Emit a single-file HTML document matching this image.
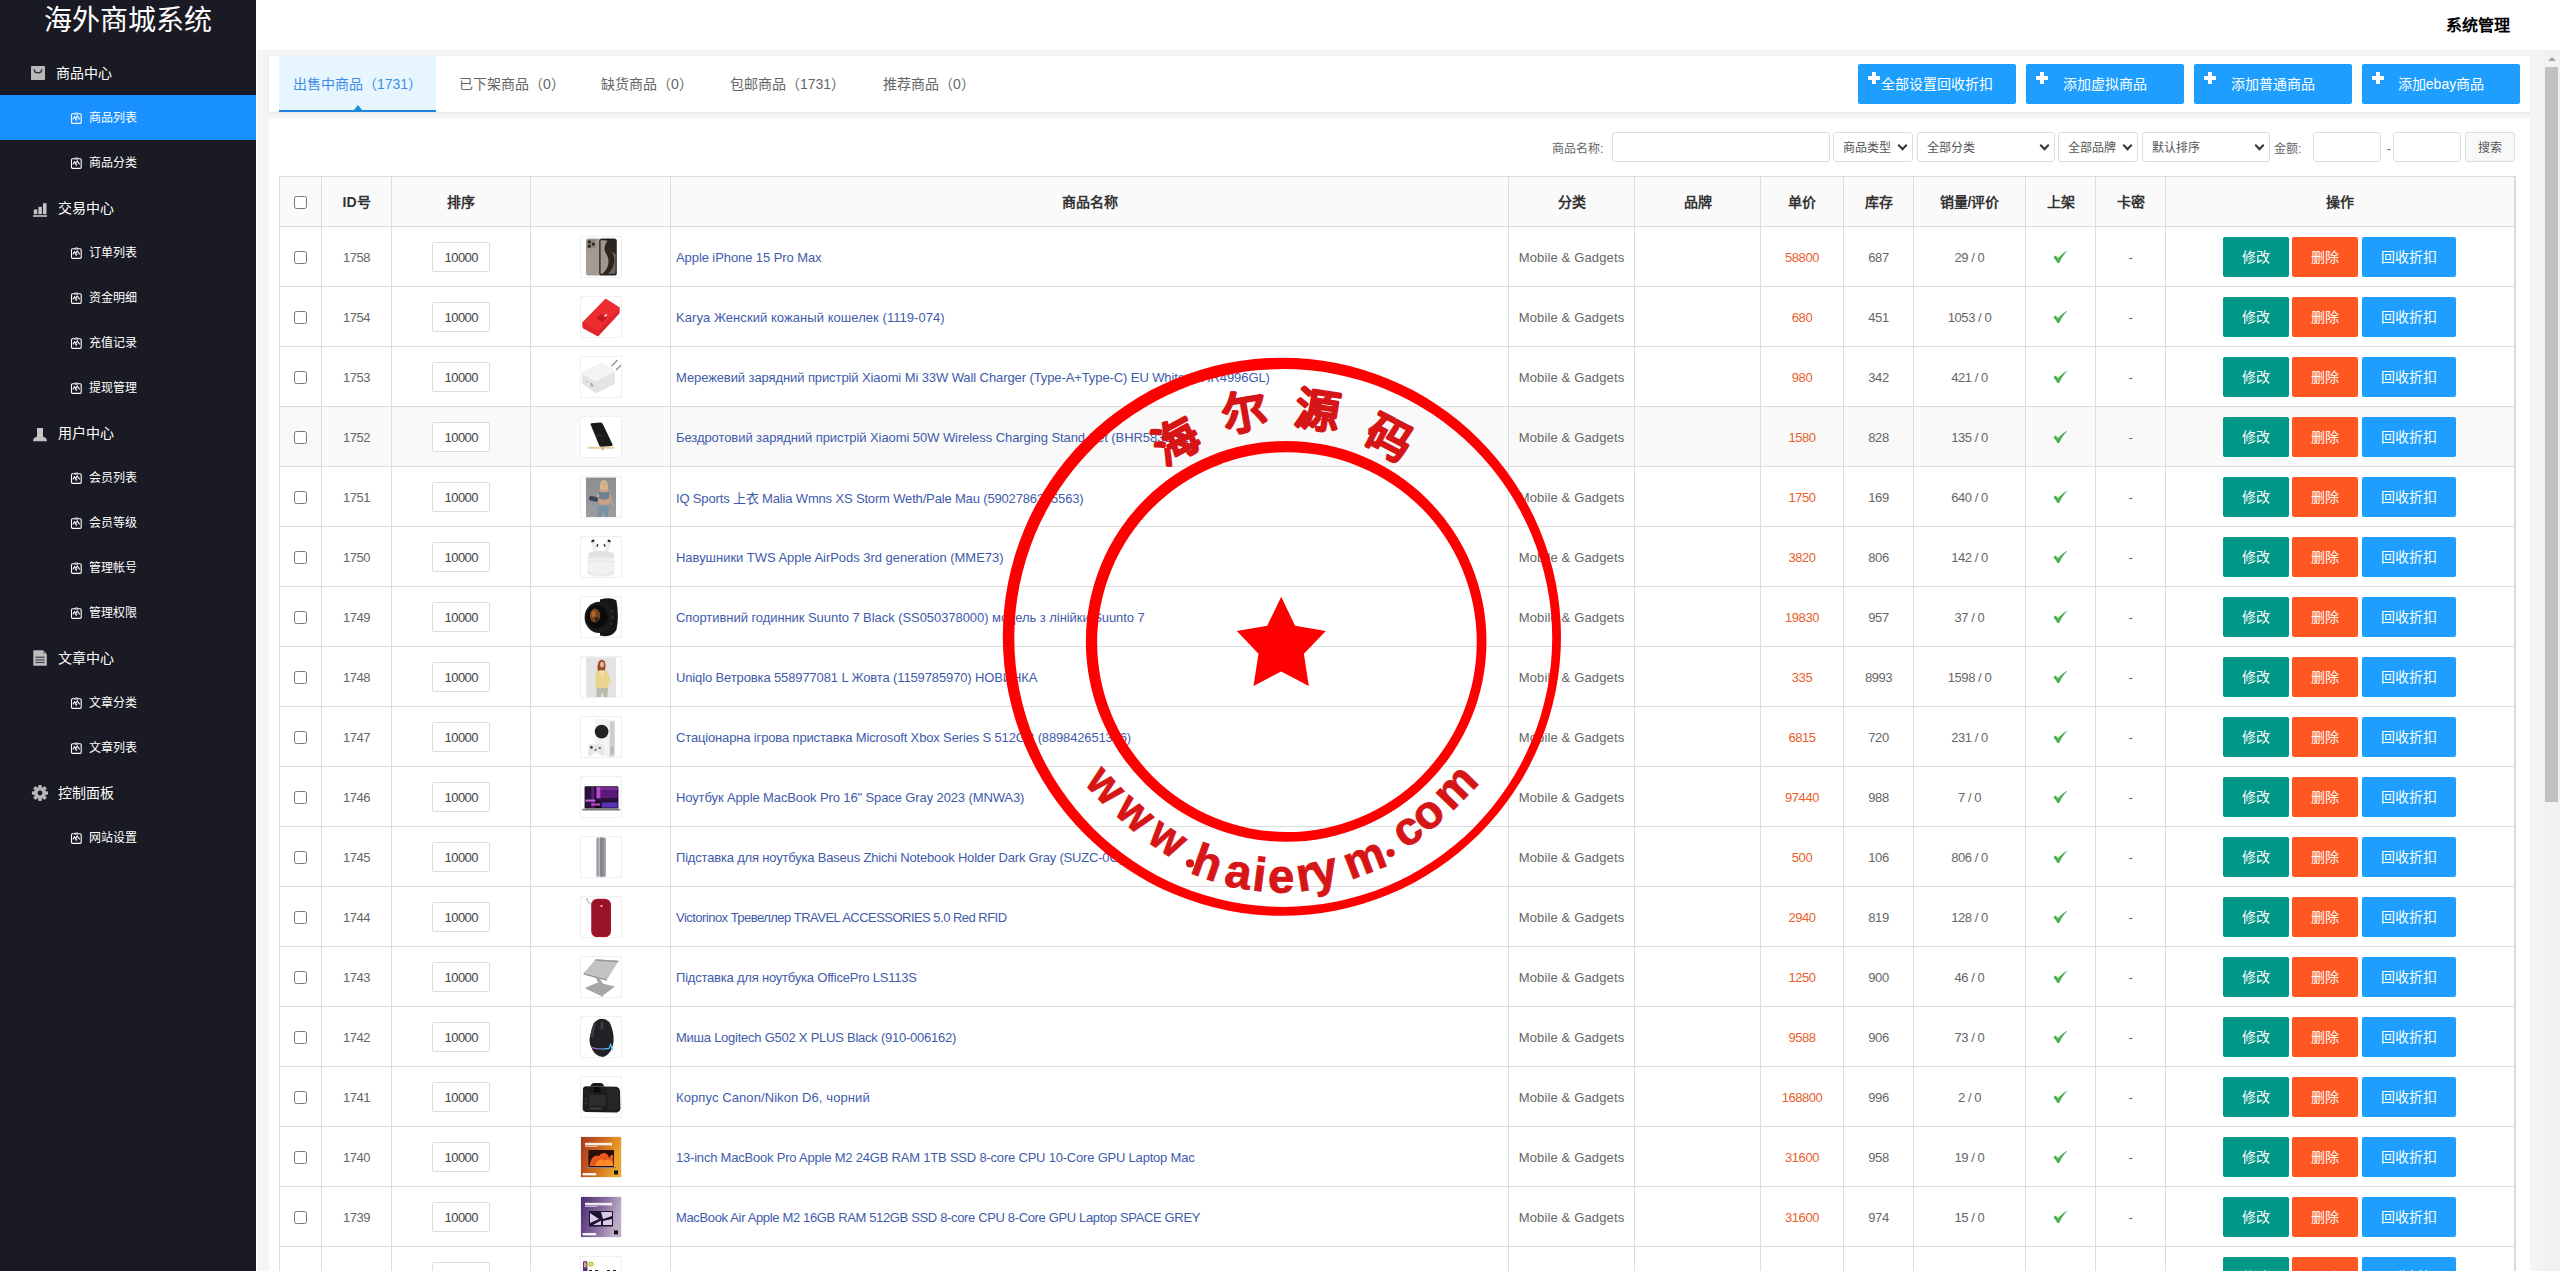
<!DOCTYPE html>
<html lang="zh-CN"><head><meta charset="utf-8"><title>海外商城系统</title>
<style>
*{box-sizing:border-box}
html,body{margin:0;padding:0}
body{width:2560px;height:1271px;overflow:hidden;position:relative;background:#fff;font-family:"Liberation Sans",sans-serif;font-size:13px;color:#666}
ul,li{margin:0;padding:0;list-style:none}
a{text-decoration:none}
i{font-style:normal}
/* sidebar */
#side{position:absolute;left:0;top:0;width:256px;height:1271px;background:#191a23;color:#fff;overflow:hidden}
#side .logo{position:absolute;left:0;top:1px;width:256px;height:40px;line-height:40px;text-align:center;font-size:28px;color:#fff;white-space:nowrap}
#side .menu{position:absolute;left:0;top:50px;width:256px}
#side .g,#side .s{position:relative;height:45px;line-height:47px;white-space:nowrap;color:#fff}
#side .g{font-size:14px}
#side .g span{position:absolute;left:57px;top:0}
#side .g svg{position:absolute;left:30px;top:13px}
#side .s{font-size:12px}
#side .s span{position:absolute;left:89px;top:0}
#side .s svg{position:absolute;left:70px;top:17px}
#side .s.on{background:#1890ff}
/* top */
#top{position:absolute;left:256px;top:0;width:2304px;height:50px;background:#fff}
#top .sys{position:absolute;right:50px;top:0;height:50px;line-height:52px;font-size:16px;font-weight:bold;color:#000}
#main{position:absolute;left:257px;top:50px;width:2286px;height:1221px;background:#f4f4f4;overflow:hidden}
#card1{position:absolute;left:12px;top:6px;width:2261px;height:56px;background:#fff;box-shadow:0 1px 3px rgba(0,0,0,.06)}
.tabs{position:absolute;left:0;top:0;height:56px;white-space:nowrap;font-size:0}
.tabs li{display:block;position:absolute;top:0;height:56px;line-height:56px;padding:0 14px;font-size:14px;color:#666;border-bottom:2px solid transparent;vertical-align:top}
.tabs li.on{background:#e6f5fe;color:#3f8ee6;border-bottom-color:#1e86e0}
.tabs li .tri{position:absolute;left:50%;bottom:0;margin-left:-4px;width:0;height:0;border-left:4px solid transparent;border-right:4px solid transparent;border-bottom:5px solid #1492d6}
.tbtn{position:absolute;top:8px;width:158px;height:40px;line-height:41px;background:#1e9fff;color:#fff;font-size:14px;text-align:center;border-radius:2px;white-space:nowrap}
.tbtn .plus{position:absolute;left:10px;top:8px;width:12px;height:12px}
.tbtn .plus:before{content:"";position:absolute;left:3.75px;top:0;width:4.5px;height:12px;background:#fff}
.tbtn .plus:after{content:"";position:absolute;left:0;top:3.75px;width:12px;height:4.5px;background:#fff}
#card2{position:absolute;left:12px;top:68px;width:2261px;height:1200px;background:#fff}
.filter{position:absolute;left:0;top:14px;width:2261px;height:30px;font-size:12px;color:#666}
.filter span{position:absolute;top:0;height:30px;line-height:35px;white-space:nowrap;overflow:hidden}
.filter .inp{border:1px solid #ddd;border-radius:3px;background:#fff}
.filter .sel{border:1px solid #ddd;border-radius:3px;background:#fff;padding-left:9px;height:30px;line-height:31px;color:#555}
.filter .sel .chev{position:absolute;right:6px;top:9px;width:7px;height:7px;border-right:2px solid #333;border-bottom:2px solid #333;transform:rotate(45deg);transform-origin:center}
.filter .sbtn{border:1px solid #ddd;border-radius:3px;background:#f8f8f8;text-align:center;color:#555;line-height:31px}
/* table */
.tb{position:absolute;left:10px;top:58px;width:2236px;table-layout:fixed;border-collapse:collapse;border:1px solid #dcdcdc;border-right:2px solid #dcdcdc;color:#666;font-size:13px}
.tb th,.tb td{border:1px solid #dcdcdc;text-align:center;vertical-align:middle;padding:0;overflow:hidden;white-space:nowrap}
.tb th{height:50px;background:#fafafa;color:#333;font-size:14px;font-weight:bold}
.tb th:not(:first-child){padding-bottom:2px}
.tb td.t{padding-top:2px;letter-spacing:-.45px}
.tb td{height:60px}
.tb tr.hov td{background:#f9f9f9}
.tb td.nm{text-align:left;padding-left:5px;padding-top:2px}
.tb td.nm a{color:#3f5bab;display:inline-block}
.tb td.pr{color:#e8602c}
.cb{display:inline-block;width:13px;height:13px;border:1px solid #767676;border-radius:2.5px;background:#fff;vertical-align:middle;position:relative;top:0px;left:-.5px}
.ord{display:inline-block;width:58px;height:30px;line-height:30px;border:1px solid #ddd;border-radius:2px;background:#fff;color:#444;font-size:13px;vertical-align:middle;letter-spacing:-.5px;text-indent:.5px}
.th{display:inline-block;width:42px;height:42px;border:1px solid #f0f0f0;background:#fff;vertical-align:middle;position:relative;left:0;overflow:hidden}
.th svg{display:block}
.ok{vertical-align:middle;position:relative;left:-1px;top:-1px}
.op{font-size:0;white-space:nowrap}
.op a{display:inline-block;height:40px;line-height:40px;padding:0 19px;color:#fff;font-size:14px;border-radius:2px;vertical-align:middle;margin:0}
.op .b2{margin:0 4px 0 3px}
.op .b1{background:#009688}
.op .b2{background:#ff5722}
.op .b3{background:#1e9fff}
/* scrollbar */
#sbar{position:absolute;left:2543px;top:50px;width:17px;height:1221px;background:#f1f1f1}
#sbar .up{position:absolute;left:5px;top:7px;width:0;height:0;border-left:4px solid transparent;border-right:4px solid transparent;border-bottom:4px solid #a3a3a3}
#sbar .thumb{position:absolute;left:2px;top:17px;width:13px;height:735px;background:#c1c1c1}
#stamp{position:absolute;left:0;top:0;width:2560px;height:1271px;pointer-events:none}

</style></head>
<body>
<div id="side">
 <div class="logo">海外商城系统</div>
 <div class="menu">
  <div class="g"><svg width="20" height="20" viewBox="0 0 20 20"><rect x="1" y="3" width="14" height="14" rx="0.8" fill="#b9b9b9"/><path d="M4.2 6.2 C4.2 11 11.8 11 11.8 6.2" fill="none" stroke="#26272f" stroke-width="1.3"/></svg><span style="left:56px">商品中心</span></div>
  <div class="s on"><svg width="13" height="13" viewBox="0 0 13 13"><rect x="1.5" y="1.75" width="9.7" height="9.6" rx="1" fill="none" stroke="#fff" stroke-width="1.1"/><ellipse cx="6.35" cy="1.45" rx="2.1" ry="1.05" fill="#fff"/><ellipse cx="6.35" cy="1.45" rx="1.1" ry=".35" fill="#2b5fb4"/><path d="M2.9 7.4 L4.6 4.7 L5.7 6.2 L7.2 3.9 L9.7 7.4" fill="none" stroke="#fff" stroke-width="1.05"/><path d="M4.6 6.6 L6.3 9.6 L7.6 6.4 Z" fill="#fff" opacity=".85"/></svg><span>商品列表</span></div>
  <div class="s"><svg width="13" height="13" viewBox="0 0 13 13"><rect x="1.5" y="1.75" width="9.7" height="9.6" rx="1" fill="none" stroke="#fff" stroke-width="1.1"/><ellipse cx="6.35" cy="1.45" rx="2.1" ry="1.05" fill="#fff"/><ellipse cx="6.35" cy="1.45" rx="1.1" ry=".35" fill="#2b5fb4"/><path d="M2.9 7.4 L4.6 4.7 L5.7 6.2 L7.2 3.9 L9.7 7.4" fill="none" stroke="#fff" stroke-width="1.05"/><path d="M4.6 6.6 L6.3 9.6 L7.6 6.4 Z" fill="#fff" opacity=".85"/></svg><span>商品分类</span></div>
  <div class="g"><svg width="20" height="20" viewBox="0 0 20 20"><rect x="3" y="17.2" width="14" height="1.6" fill="#c4c4c4"/><rect x="3.8" y="11.4" width="3.5" height="4.8" fill="#c4c4c4"/><rect x="8.4" y="8.8" width="3.5" height="7.4" fill="#c4c4c4"/><rect x="13" y="5.2" width="3.5" height="11" fill="#c4c4c4"/></svg><span style="left:58px">交易中心</span></div>
  <div class="s"><svg width="13" height="13" viewBox="0 0 13 13"><rect x="1.5" y="1.75" width="9.7" height="9.6" rx="1" fill="none" stroke="#fff" stroke-width="1.1"/><ellipse cx="6.35" cy="1.45" rx="2.1" ry="1.05" fill="#fff"/><ellipse cx="6.35" cy="1.45" rx="1.1" ry=".35" fill="#2b5fb4"/><path d="M2.9 7.4 L4.6 4.7 L5.7 6.2 L7.2 3.9 L9.7 7.4" fill="none" stroke="#fff" stroke-width="1.05"/><path d="M4.6 6.6 L6.3 9.6 L7.6 6.4 Z" fill="#fff" opacity=".85"/></svg><span>订单列表</span></div>
  <div class="s"><svg width="13" height="13" viewBox="0 0 13 13"><rect x="1.5" y="1.75" width="9.7" height="9.6" rx="1" fill="none" stroke="#fff" stroke-width="1.1"/><ellipse cx="6.35" cy="1.45" rx="2.1" ry="1.05" fill="#fff"/><ellipse cx="6.35" cy="1.45" rx="1.1" ry=".35" fill="#2b5fb4"/><path d="M2.9 7.4 L4.6 4.7 L5.7 6.2 L7.2 3.9 L9.7 7.4" fill="none" stroke="#fff" stroke-width="1.05"/><path d="M4.6 6.6 L6.3 9.6 L7.6 6.4 Z" fill="#fff" opacity=".85"/></svg><span>资金明细</span></div>
  <div class="s"><svg width="13" height="13" viewBox="0 0 13 13"><rect x="1.5" y="1.75" width="9.7" height="9.6" rx="1" fill="none" stroke="#fff" stroke-width="1.1"/><ellipse cx="6.35" cy="1.45" rx="2.1" ry="1.05" fill="#fff"/><ellipse cx="6.35" cy="1.45" rx="1.1" ry=".35" fill="#2b5fb4"/><path d="M2.9 7.4 L4.6 4.7 L5.7 6.2 L7.2 3.9 L9.7 7.4" fill="none" stroke="#fff" stroke-width="1.05"/><path d="M4.6 6.6 L6.3 9.6 L7.6 6.4 Z" fill="#fff" opacity=".85"/></svg><span>充值记录</span></div>
  <div class="s"><svg width="13" height="13" viewBox="0 0 13 13"><rect x="1.5" y="1.75" width="9.7" height="9.6" rx="1" fill="none" stroke="#fff" stroke-width="1.1"/><ellipse cx="6.35" cy="1.45" rx="2.1" ry="1.05" fill="#fff"/><ellipse cx="6.35" cy="1.45" rx="1.1" ry=".35" fill="#2b5fb4"/><path d="M2.9 7.4 L4.6 4.7 L5.7 6.2 L7.2 3.9 L9.7 7.4" fill="none" stroke="#fff" stroke-width="1.05"/><path d="M4.6 6.6 L6.3 9.6 L7.6 6.4 Z" fill="#fff" opacity=".85"/></svg><span>提现管理</span></div>
  <div class="g"><svg width="20" height="20" viewBox="0 0 20 20"><path d="M7 5 H13 V13.6 L16.2 15.2 L17 18.2 H3 L3.8 15.2 L7 13.6 Z" fill="#c6c6c6"/></svg><span style="left:58px">用户中心</span></div>
  <div class="s"><svg width="13" height="13" viewBox="0 0 13 13"><rect x="1.5" y="1.75" width="9.7" height="9.6" rx="1" fill="none" stroke="#fff" stroke-width="1.1"/><ellipse cx="6.35" cy="1.45" rx="2.1" ry="1.05" fill="#fff"/><ellipse cx="6.35" cy="1.45" rx="1.1" ry=".35" fill="#2b5fb4"/><path d="M2.9 7.4 L4.6 4.7 L5.7 6.2 L7.2 3.9 L9.7 7.4" fill="none" stroke="#fff" stroke-width="1.05"/><path d="M4.6 6.6 L6.3 9.6 L7.6 6.4 Z" fill="#fff" opacity=".85"/></svg><span>会员列表</span></div>
  <div class="s"><svg width="13" height="13" viewBox="0 0 13 13"><rect x="1.5" y="1.75" width="9.7" height="9.6" rx="1" fill="none" stroke="#fff" stroke-width="1.1"/><ellipse cx="6.35" cy="1.45" rx="2.1" ry="1.05" fill="#fff"/><ellipse cx="6.35" cy="1.45" rx="1.1" ry=".35" fill="#2b5fb4"/><path d="M2.9 7.4 L4.6 4.7 L5.7 6.2 L7.2 3.9 L9.7 7.4" fill="none" stroke="#fff" stroke-width="1.05"/><path d="M4.6 6.6 L6.3 9.6 L7.6 6.4 Z" fill="#fff" opacity=".85"/></svg><span>会员等级</span></div>
  <div class="s"><svg width="13" height="13" viewBox="0 0 13 13"><rect x="1.5" y="1.75" width="9.7" height="9.6" rx="1" fill="none" stroke="#fff" stroke-width="1.1"/><ellipse cx="6.35" cy="1.45" rx="2.1" ry="1.05" fill="#fff"/><ellipse cx="6.35" cy="1.45" rx="1.1" ry=".35" fill="#2b5fb4"/><path d="M2.9 7.4 L4.6 4.7 L5.7 6.2 L7.2 3.9 L9.7 7.4" fill="none" stroke="#fff" stroke-width="1.05"/><path d="M4.6 6.6 L6.3 9.6 L7.6 6.4 Z" fill="#fff" opacity=".85"/></svg><span>管理帐号</span></div>
  <div class="s"><svg width="13" height="13" viewBox="0 0 13 13"><rect x="1.5" y="1.75" width="9.7" height="9.6" rx="1" fill="none" stroke="#fff" stroke-width="1.1"/><ellipse cx="6.35" cy="1.45" rx="2.1" ry="1.05" fill="#fff"/><ellipse cx="6.35" cy="1.45" rx="1.1" ry=".35" fill="#2b5fb4"/><path d="M2.9 7.4 L4.6 4.7 L5.7 6.2 L7.2 3.9 L9.7 7.4" fill="none" stroke="#fff" stroke-width="1.05"/><path d="M4.6 6.6 L6.3 9.6 L7.6 6.4 Z" fill="#fff" opacity=".85"/></svg><span>管理权限</span></div>
  <div class="g"><svg width="20" height="20" viewBox="0 0 20 20"><path d="M3.3 2.2 H13 L16.8 6 V17.8 H3.3 Z" fill="#bdbdbd"/><path d="M13 2.2 V6 H16.8" fill="#8e8e8e"/><rect x="5.4" y="8.6" width="9.2" height="1.3" fill="#4a4b52"/><rect x="5.4" y="11.2" width="9.2" height="1.3" fill="#4a4b52"/><rect x="5.4" y="13.8" width="9.2" height="1.3" fill="#4a4b52"/></svg><span style="left:58px">文章中心</span></div>
  <div class="s"><svg width="13" height="13" viewBox="0 0 13 13"><rect x="1.5" y="1.75" width="9.7" height="9.6" rx="1" fill="none" stroke="#fff" stroke-width="1.1"/><ellipse cx="6.35" cy="1.45" rx="2.1" ry="1.05" fill="#fff"/><ellipse cx="6.35" cy="1.45" rx="1.1" ry=".35" fill="#2b5fb4"/><path d="M2.9 7.4 L4.6 4.7 L5.7 6.2 L7.2 3.9 L9.7 7.4" fill="none" stroke="#fff" stroke-width="1.05"/><path d="M4.6 6.6 L6.3 9.6 L7.6 6.4 Z" fill="#fff" opacity=".85"/></svg><span>文章分类</span></div>
  <div class="s"><svg width="13" height="13" viewBox="0 0 13 13"><rect x="1.5" y="1.75" width="9.7" height="9.6" rx="1" fill="none" stroke="#fff" stroke-width="1.1"/><ellipse cx="6.35" cy="1.45" rx="2.1" ry="1.05" fill="#fff"/><ellipse cx="6.35" cy="1.45" rx="1.1" ry=".35" fill="#2b5fb4"/><path d="M2.9 7.4 L4.6 4.7 L5.7 6.2 L7.2 3.9 L9.7 7.4" fill="none" stroke="#fff" stroke-width="1.05"/><path d="M4.6 6.6 L6.3 9.6 L7.6 6.4 Z" fill="#fff" opacity=".85"/></svg><span>文章列表</span></div>
  <div class="g"><svg width="20" height="20" viewBox="0 0 20 20"><g fill="#b5b5b5"><circle cx="10" cy="10" r="6"/><g id="t"><rect x="8.2" y="1.9" width="3.6" height="16.2" rx="0.8"/></g><rect x="8.2" y="1.9" width="3.6" height="16.2" rx="0.8" transform="rotate(45 10 10)"/><rect x="8.2" y="1.9" width="3.6" height="16.2" rx="0.8" transform="rotate(90 10 10)"/><rect x="8.2" y="1.9" width="3.6" height="16.2" rx="0.8" transform="rotate(135 10 10)"/></g><circle cx="10" cy="10" r="2.4" fill="#191a23"/></svg><span style="left:58px">控制面板</span></div>
  <div class="s"><svg width="13" height="13" viewBox="0 0 13 13"><rect x="1.5" y="1.75" width="9.7" height="9.6" rx="1" fill="none" stroke="#fff" stroke-width="1.1"/><ellipse cx="6.35" cy="1.45" rx="2.1" ry="1.05" fill="#fff"/><ellipse cx="6.35" cy="1.45" rx="1.1" ry=".35" fill="#2b5fb4"/><path d="M2.9 7.4 L4.6 4.7 L5.7 6.2 L7.2 3.9 L9.7 7.4" fill="none" stroke="#fff" stroke-width="1.05"/><path d="M4.6 6.6 L6.3 9.6 L7.6 6.4 Z" fill="#fff" opacity=".85"/></svg><span>网站设置</span></div>
 </div>
</div>

<div id="top"><span class="sys">系统管理</span></div>
<div id="main">
 <div id="card1">
  <ul class="tabs">
   <li class="on" style="left:10px;width:157px">出售中商品（1731）<i class="tri"></i></li><li style="left:176px">已下架商品（0）</li><li style="left:318px">缺货商品（0）</li><li style="left:447px">包邮商品（1731）</li><li style="left:600px">推荐商品（0）</li>
  </ul>
  <a class="tbtn" style="left:1589px"><i class="plus"></i>全部设置回收折扣</a>
  <a class="tbtn" style="left:1757px"><i class="plus"></i>添加虚拟商品</a>
  <a class="tbtn" style="left:1925px"><i class="plus"></i>添加普通商品</a>
  <a class="tbtn" style="left:2093px"><i class="plus"></i>添加ebay商品</a>
 </div>
 <div id="card2">
  <div class="filter">
   <span class="lb" style="left:1283px">商品名称:</span>
   <span class="inp" style="left:1343px;width:218px"></span>
   <span class="sel" style="left:1564px;width:80px">商品类型<i class="chev"></i></span>
   <span class="sel" style="left:1648px;width:138px">全部分类<i class="chev"></i></span>
   <span class="sel" style="left:1789px;width:80px">全部品牌<i class="chev"></i></span>
   <span class="sel" style="left:1873px;width:128px">默认排序<i class="chev"></i></span>
   <span class="lb" style="left:2005px">金额:</span>
   <span class="inp" style="left:2044px;width:68px"></span>
   <span class="lb" style="left:2118px">-</span>
   <span class="inp" style="left:2124px;width:68px"></span>
   <span class="sbtn" style="left:2196px;width:50px">搜索</span>
  </div>
  <table class="tb" cellspacing="0" cellpadding="0">
   <colgroup><col style="width:42px"><col style="width:70px"><col style="width:139px"><col style="width:140px"><col style="width:838px"><col style="width:126px"><col style="width:126px"><col style="width:83px"><col style="width:70px"><col style="width:112px"><col style="width:70px"><col style="width:70px"><col style="width:349px"></colgroup>
   <thead><tr><th><i class="cb"></i></th><th>ID号</th><th>排序</th><th></th><th>商品名称</th><th>分类</th><th>品牌</th><th>单价</th><th>库存</th><th>销量/评价</th><th>上架</th><th>卡密</th><th>操作</th></tr></thead>
   <tbody>
    <tr><td><i class="cb"></i></td><td class="t">1758</td><td><span class="ord">10000</span></td><td><span class="th"><svg width="40" height="40" viewBox="0 0 40 40"><rect x="5" y="1.5" width="14.5" height="37" rx="2.6" fill="#a29c93"/><rect x="6" y="2.6" width="8.6" height="9" rx="2.2" fill="#8c867d"/><circle cx="8.3" cy="5" r="1.7" fill="#2c2926"/><circle cx="8.3" cy="9.2" r="1.7" fill="#2c2926"/><circle cx="12.3" cy="7.1" r="1.7" fill="#2c2926"/><rect x="18.2" y="1.5" width="17.6" height="37" rx="2.6" fill="#2b2622"/><path d="M19.6 3.2 H27 C23 8 22.5 13 25.5 17.5 C29 23 28 31 21.5 36.8 H19.6 Z" fill="#a1988d"/><path d="M30 14 C35 19 34.5 30 27 36.8 H31.5 C34.5 36.8 34.6 36 34.6 33 V17 Z" fill="#6f665d"/><rect x="24.5" y="2.3" width="5" height="1.3" rx=".6" fill="#111"/></svg></span></td><td class="nm"><a id="n1758" style="letter-spacing:-0.084px">Apple iPhone 15 Pro Max</a></td><td class="t" style="letter-spacing:.14px">Mobile &amp; Gadgets</td><td></td><td class="pr t">58800</td><td class="t">687</td><td class="t">29 / 0</td><td><svg class="ok" width="14" height="12" viewBox="0 0 14 12"><path d="M0.2 6.2 L2.6 4.6 L5.1 7.2 C7.6 4.2 10.4 1.8 13.6 0 L14 0.6 C10.9 3.6 8.3 7.2 6.2 12 L4.4 12 C3.4 9.8 2 7.8 0.2 6.2 Z" fill="#4caf50"/></svg></td><td class="t">-</td><td class="op"><a class="b1">修改</a> <a class="b2">删除</a> <a class="b3">回收折扣</a></td></tr>
    <tr><td><i class="cb"></i></td><td class="t">1754</td><td><span class="ord">10000</span></td><td><span class="th"><svg width="40" height="40" viewBox="0 0 40 40"><path d="M24.6 1.8 L38.6 10.6 Q39.2 13.6 38.4 16.4 L17 39.4 L1.8 31.3 Q.8 28.4 1.4 25.6 Z" fill="#e1232b"/><path d="M24.6 1.8 L38.6 10.6 L17.4 33.4 L1.4 25.6 Z" fill="#ee2d33"/><path d="M19.5 16.8 L25.8 20.4 L21.6 25.2 L15.4 21.6 Z" fill="#c9151f"/><rect x="23" y="17.6" width="3.2" height="1.6" fill="#f3dede" transform="rotate(-42 24.6 18.4)"/></svg></span></td><td class="nm"><a id="n1754" style="letter-spacing:0.057px">Karya Женский кожаный кошелек (1119-074)</a></td><td class="t" style="letter-spacing:.14px">Mobile &amp; Gadgets</td><td></td><td class="pr t">680</td><td class="t">451</td><td class="t">1053 / 0</td><td><svg class="ok" width="14" height="12" viewBox="0 0 14 12"><path d="M0.2 6.2 L2.6 4.6 L5.1 7.2 C7.6 4.2 10.4 1.8 13.6 0 L14 0.6 C10.9 3.6 8.3 7.2 6.2 12 L4.4 12 C3.4 9.8 2 7.8 0.2 6.2 Z" fill="#4caf50"/></svg></td><td class="t">-</td><td class="op"><a class="b1">修改</a> <a class="b2">删除</a> <a class="b3">回收折扣</a></td></tr>
    <tr><td><i class="cb"></i></td><td class="t">1753</td><td><span class="ord">10000</span></td><td><span class="th"><svg width="40" height="40" viewBox="0 0 40 40"><path d="M31 8.5 L36 3.6" stroke="#9b9b9b" stroke-width="1.6" stroke-linecap="round"/><path d="M35.5 12.6 L40 8.2" stroke="#9b9b9b" stroke-width="1.6" stroke-linecap="round"/><path d="M.8 17 Q.4 15.6 2 14.8 L19 6.4 Q20.6 5.8 22 6.6 L33 13.2 Q34.2 14 34 15.4 L34 25.6 Q34 26.8 32.8 27.4 L16.6 35.8 Q15.2 36.4 14 35.6 L2 27.6 Q1 26.8 1 25.6 Z" fill="#e4e4e4"/><path d="M.8 17 Q.4 15.6 2 14.8 L19 6.4 Q20.6 5.8 22 6.6 L33 13.2 Q34.2 14 33 15 L15.6 24 Q14.4 24.6 13.2 23.8 Z" fill="#f4f4f4"/><rect x="5" y="23" width="1.2" height="2.6" rx=".6" fill="#bdbdbd" transform="rotate(-30 5.6 24.3)"/><rect x="9.6" y="26" width="2.2" height="3.6" rx=".5" fill="#9fa3b3" transform="rotate(-28 10.7 27.8)"/></svg></span></td><td class="nm"><a id="n1753" style="letter-spacing:-0.096px">Мережевий зарядний пристрій Xiaomi Mi 33W Wall Charger (Type-A+Type-C) EU White (BHR4996GL)</a></td><td class="t" style="letter-spacing:.14px">Mobile &amp; Gadgets</td><td></td><td class="pr t">980</td><td class="t">342</td><td class="t">421 / 0</td><td><svg class="ok" width="14" height="12" viewBox="0 0 14 12"><path d="M0.2 6.2 L2.6 4.6 L5.1 7.2 C7.6 4.2 10.4 1.8 13.6 0 L14 0.6 C10.9 3.6 8.3 7.2 6.2 12 L4.4 12 C3.4 9.8 2 7.8 0.2 6.2 Z" fill="#4caf50"/></svg></td><td class="t">-</td><td class="op"><a class="b1">修改</a> <a class="b2">删除</a> <a class="b3">回收折扣</a></td></tr>
    <tr class="hov"><td><i class="cb"></i></td><td class="t">1752</td><td><span class="ord">10000</span></td><td><span class="th"><svg width="40" height="40" viewBox="0 0 40 40"><rect x="6.5" y="29.8" width="27" height="2" rx=".6" fill="#e9cba3"/><rect x="20.5" y="30" width="2.4" height="3.4" fill="#dcb98d"/><path d="M9.6 7.6 Q9 6.4 10.4 6.2 L19.4 5.6 Q21 5.6 21.8 7 L31.6 27.4 Q32 28.8 30.6 29 L20.4 29.8 Q18.8 29.8 18.2 28.4 Z" fill="#1b1b1b"/><path d="M16 18.4 L22.6 18" stroke="#3a3a3a" stroke-width=".9"/></svg></span></td><td class="nm"><a id="n1752" style="letter-spacing:-0.073px">Бездротовий зарядний пристрій Xiaomi 50W Wireless Charging Stand Set (BHR5835GL)</a></td><td class="t" style="letter-spacing:.14px">Mobile &amp; Gadgets</td><td></td><td class="pr t">1580</td><td class="t">828</td><td class="t">135 / 0</td><td><svg class="ok" width="14" height="12" viewBox="0 0 14 12"><path d="M0.2 6.2 L2.6 4.6 L5.1 7.2 C7.6 4.2 10.4 1.8 13.6 0 L14 0.6 C10.9 3.6 8.3 7.2 6.2 12 L4.4 12 C3.4 9.8 2 7.8 0.2 6.2 Z" fill="#4caf50"/></svg></td><td class="t">-</td><td class="op"><a class="b1">修改</a> <a class="b2">删除</a> <a class="b3">回收折扣</a></td></tr>
    <tr><td><i class="cb"></i></td><td class="t">1751</td><td><span class="ord">10000</span></td><td><span class="th"><svg width="40" height="40" viewBox="0 0 40 40"><defs><linearGradient id="g5" x1="0" y1="0" x2="0" y2="1"><stop offset="0" stop-color="#8b8d90"/><stop offset="1" stop-color="#9c9ea1"/></linearGradient></defs><rect x="5" y=".6" width="30" height="39.4" fill="url(#g5)"/><path d="M19.6 4.4 Q23 1.6 26 4.6 Q27.6 9 26.4 13.4 L19.4 13.4 Q18.4 8.6 19.6 4.4 Z" fill="#d8b88c"/><ellipse cx="23" cy="7.4" rx="2.3" ry="3" fill="#d9ab8d"/><path d="M18 13.2 Q23 11.8 28 13.2 L29.4 21.4 L27.8 27.6 L18.8 27.6 L16.6 21.2 Z" fill="#cfa184"/><path d="M17.6 14.2 Q22.8 16.6 28 14.2 L28.6 21.6 Q22.8 23.8 17.2 21.6 Z" fill="#6a8292"/><path d="M16.4 29.4 Q22.6 27.4 28.6 29.4 L27 40 L23.6 40 L22.6 33.8 L20.4 40 L16.2 40 Z" fill="#7a93a4"/><path d="M16.8 16 L14.2 24.6 L15.8 25.2 L18.6 18 Z" fill="#cfa184"/><path d="M28.8 16 L31 24 L32.6 28.6 L31.6 29 L28.2 22 Z" fill="#cfa184"/><rect x="7.8" y="19.4" width="9.4" height="4.8" rx="2.4" fill="#3b4853" transform="rotate(14 12.5 21.8)"/></svg></span></td><td class="nm"><a id="n1751" style="letter-spacing:-0.160px">IQ Sports 上衣 Malia Wmns XS Storm Weth/Pale Mau (5902786355563)</a></td><td class="t" style="letter-spacing:.14px">Mobile &amp; Gadgets</td><td></td><td class="pr t">1750</td><td class="t">169</td><td class="t">640 / 0</td><td><svg class="ok" width="14" height="12" viewBox="0 0 14 12"><path d="M0.2 6.2 L2.6 4.6 L5.1 7.2 C7.6 4.2 10.4 1.8 13.6 0 L14 0.6 C10.9 3.6 8.3 7.2 6.2 12 L4.4 12 C3.4 9.8 2 7.8 0.2 6.2 Z" fill="#4caf50"/></svg></td><td class="t">-</td><td class="op"><a class="b1">修改</a> <a class="b2">删除</a> <a class="b3">回收折扣</a></td></tr>
    <tr><td><i class="cb"></i></td><td class="t">1750</td><td><span class="ord">10000</span></td><td><span class="th"><svg width="40" height="40" viewBox="0 0 40 40"><path d="M10.4 3.4 Q12.4 1.6 14.4 3.4 Q16 6 14.6 8.2 L16.6 17.4 L14.2 17.8 L11.4 9 Q9 7 10.4 3.4 Z" fill="#ececec"/><path d="M29.6 3.4 Q27.6 1.6 25.6 3.4 Q24 6 25.4 8.2 L23.4 17.4 L25.8 17.8 L28.6 9 Q31 7 29.6 3.4 Z" fill="#ececec"/><ellipse cx="11.8" cy="3.9" rx="1.7" ry="1.1" fill="#222" transform="rotate(-25 11.8 3.9)"/><ellipse cx="28.2" cy="3.9" rx="1.7" ry="1.1" fill="#222" transform="rotate(25 28.2 3.9)"/><ellipse cx="16.4" cy="8.4" rx=".8" ry="1.6" fill="#333" transform="rotate(20 16.4 8.4)"/><ellipse cx="23.6" cy="8.4" rx=".8" ry="1.6" fill="#333" transform="rotate(-20 23.6 8.4)"/><path d="M7.4 16 Q20 11.6 32.6 16 L33 22 L7 22 Z" fill="#e2e2e2"/><rect x="6.2" y="20.6" width="27.6" height="19" rx="5.6" fill="#f1f1f1"/><path d="M6.2 25 Q20 22.6 33.8 25" stroke="#dcdcdc" stroke-width=".7" fill="none"/><path d="M7 34 Q20 41.6 33 34 L33 36 Q20 41.6 7 36 Z" fill="#e3e3e3"/></svg></span></td><td class="nm"><a id="n1750" style="letter-spacing:-0.033px">Навушники TWS Apple AirPods 3rd generation (MME73)</a></td><td class="t" style="letter-spacing:.14px">Mobile &amp; Gadgets</td><td></td><td class="pr t">3820</td><td class="t">806</td><td class="t">142 / 0</td><td><svg class="ok" width="14" height="12" viewBox="0 0 14 12"><path d="M0.2 6.2 L2.6 4.6 L5.1 7.2 C7.6 4.2 10.4 1.8 13.6 0 L14 0.6 C10.9 3.6 8.3 7.2 6.2 12 L4.4 12 C3.4 9.8 2 7.8 0.2 6.2 Z" fill="#4caf50"/></svg></td><td class="t">-</td><td class="op"><a class="b1">修改</a> <a class="b2">删除</a> <a class="b3">回收折扣</a></td></tr>
    <tr><td><i class="cb"></i></td><td class="t">1749</td><td><span class="ord">10000</span></td><td><span class="th"><svg width="40" height="40" viewBox="0 0 40 40"><path d="M19 2.6 Q30 -.4 35.4 3.6 Q38.4 20 35.4 33 Q30 41.4 19 38.4 Z" fill="#151515"/><ellipse cx="18.4" cy="20.4" rx="14.8" ry="15.6" fill="#1a1a1a"/><ellipse cx="16" cy="19.8" rx="10.8" ry="11.6" fill="#0b0b0b"/><ellipse cx="14" cy="18.6" rx="5.2" ry="7" fill="#8a4d1f" opacity=".85"/><ellipse cx="12.6" cy="17" rx="2.2" ry="3" fill="#c77a30" opacity=".7"/><ellipse cx="15.6" cy="22.4" rx="1.6" ry="2.4" fill="#1a0f08" opacity=".7"/><circle cx="30.6" cy="14" r="1" fill="#3a3a3a"/><circle cx="31.4" cy="20.6" r="1.1" fill="#3a3a3a"/><circle cx="30.4" cy="27" r="1" fill="#3a3a3a"/></svg></span></td><td class="nm"><a id="n1749" style="letter-spacing:-0.060px">Спортивний годинник Suunto 7 Black (SS050378000) модель з лінійки Suunto 7</a></td><td class="t" style="letter-spacing:.14px">Mobile &amp; Gadgets</td><td></td><td class="pr t">19830</td><td class="t">957</td><td class="t">37 / 0</td><td><svg class="ok" width="14" height="12" viewBox="0 0 14 12"><path d="M0.2 6.2 L2.6 4.6 L5.1 7.2 C7.6 4.2 10.4 1.8 13.6 0 L14 0.6 C10.9 3.6 8.3 7.2 6.2 12 L4.4 12 C3.4 9.8 2 7.8 0.2 6.2 Z" fill="#4caf50"/></svg></td><td class="t">-</td><td class="op"><a class="b1">修改</a> <a class="b2">删除</a> <a class="b3">回收折扣</a></td></tr>
    <tr><td><i class="cb"></i></td><td class="t">1748</td><td><span class="ord">10000</span></td><td><span class="th"><svg width="40" height="40" viewBox="0 0 40 40"><rect x="5" y=".4" width="30" height="39.6" fill="#e3e3e3"/><path d="M17.4 5 Q20.4 1 23.8 4.4 Q25.4 9.6 23.4 14.4 L17 14.8 Q15.6 9.4 17.4 5 Z" fill="#9c4a2b"/><ellipse cx="21" cy="7.6" rx="2" ry="2.8" fill="#e2b79c"/><path d="M15.4 14.4 Q21 12.4 26.6 14.4 L30 24.6 L27.8 26 L27.2 31.8 L15 31.8 L14.6 25.6 L14 20 Z" fill="#ead38c"/><path d="M18.6 13.6 L21 19.6 L23.2 13.6 Z" fill="#f0e3c8"/><path d="M15.2 31 L27 31 L26.4 40 L22.6 40 L21.4 34.6 L19.8 40 L15.6 40 Z" fill="#b7bcae"/></svg></span></td><td class="nm"><a id="n1748" style="letter-spacing:-0.129px">Uniqlo Ветровка 558977081 L Жовта (1159785970) НОВИНКА</a></td><td class="t" style="letter-spacing:.14px">Mobile &amp; Gadgets</td><td></td><td class="pr t">335</td><td class="t">8993</td><td class="t">1598 / 0</td><td><svg class="ok" width="14" height="12" viewBox="0 0 14 12"><path d="M0.2 6.2 L2.6 4.6 L5.1 7.2 C7.6 4.2 10.4 1.8 13.6 0 L14 0.6 C10.9 3.6 8.3 7.2 6.2 12 L4.4 12 C3.4 9.8 2 7.8 0.2 6.2 Z" fill="#4caf50"/></svg></td><td class="t">-</td><td class="op"><a class="b1">修改</a> <a class="b2">删除</a> <a class="b3">回收折扣</a></td></tr>
    <tr><td><i class="cb"></i></td><td class="t">1747</td><td><span class="ord">10000</span></td><td><span class="th"><svg width="40" height="40" viewBox="0 0 40 40"><path d="M14.4 3.2 L18 1.6 L33.6 3.6 L33.6 38.6 L28.6 40 L14 36.6 Z" fill="#f3f3f3"/><path d="M28.8 5.2 L33.6 3.6 L33.6 38.6 L28.6 40 Z" fill="#cdcdcd"/><circle cx="20.6" cy="14.6" r="6.9" fill="#232323"/><path d="M30.4 30 V37 M31.8 29.6 V36.6" stroke="#9a9a9a" stroke-width=".6"/><path d="M7.4 28.6 Q10 25.6 13.6 27.4 L18.6 26.6 Q21.4 27 22.4 30.6 L23 37.6 Q22 39.6 19.8 38.6 L17.6 34.8 L12.4 35.4 L10.2 38.8 Q7.8 39.4 7 37.2 Z" fill="#e6e6e6"/><circle cx="10.4" cy="30.4" r="1.4" fill="#3a3a3a"/><circle cx="18.8" cy="31" r="1.1" fill="#555"/><circle cx="14.6" cy="32.8" r="1.1" fill="#777"/></svg></span></td><td class="nm"><a id="n1747" style="letter-spacing:-0.150px">Стаціонарна ігрова приставка Microsoft Xbox Series S 512GB (889842651386)</a></td><td class="t" style="letter-spacing:.14px">Mobile &amp; Gadgets</td><td></td><td class="pr t">6815</td><td class="t">720</td><td class="t">231 / 0</td><td><svg class="ok" width="14" height="12" viewBox="0 0 14 12"><path d="M0.2 6.2 L2.6 4.6 L5.1 7.2 C7.6 4.2 10.4 1.8 13.6 0 L14 0.6 C10.9 3.6 8.3 7.2 6.2 12 L4.4 12 C3.4 9.8 2 7.8 0.2 6.2 Z" fill="#4caf50"/></svg></td><td class="t">-</td><td class="op"><a class="b1">修改</a> <a class="b2">删除</a> <a class="b3">回收折扣</a></td></tr>
    <tr><td><i class="cb"></i></td><td class="t">1746</td><td><span class="ord">10000</span></td><td><span class="th"><svg width="40" height="40" viewBox="0 0 40 40"><rect x="3.6" y="9.2" width="33.8" height="22.4" rx="1.2" fill="#120818"/><rect x="4.4" y="10" width="5.6" height="20.6" fill="#2a1040"/><rect x="10.2" y="10" width="3.4" height="20.6" fill="#5a1f78"/><rect x="15.4" y="10" width="21.2" height="11.4" fill="#5b1a78"/><rect x="15.4" y="10" width="4" height="11.4" fill="#b848c8"/><rect x="19.4" y="10" width="17.2" height="3" fill="#7a2a98"/><rect x="15.4" y="21.8" width="21.2" height="3" fill="#2a1040"/><rect x="20.6" y="25.4" width="16" height="5.2" fill="#5a34b8"/><rect x="4.4" y="22.6" width="10" height="2" fill="#c864d0"/><rect x="10.2" y="26.4" width="9" height="2.2" fill="#b048c4"/><path d="M.8 31.8 H39.4 L38.4 33.4 H1.8 Z" fill="#78787e"/></svg></span></td><td class="nm"><a id="n1746" style="letter-spacing:-0.117px">Ноутбук Apple MacBook Pro 16" Space Gray 2023 (MNWA3)</a></td><td class="t" style="letter-spacing:.14px">Mobile &amp; Gadgets</td><td></td><td class="pr t">97440</td><td class="t">988</td><td class="t">7 / 0</td><td><svg class="ok" width="14" height="12" viewBox="0 0 14 12"><path d="M0.2 6.2 L2.6 4.6 L5.1 7.2 C7.6 4.2 10.4 1.8 13.6 0 L14 0.6 C10.9 3.6 8.3 7.2 6.2 12 L4.4 12 C3.4 9.8 2 7.8 0.2 6.2 Z" fill="#4caf50"/></svg></td><td class="t">-</td><td class="op"><a class="b1">修改</a> <a class="b2">删除</a> <a class="b3">回收折扣</a></td></tr>
    <tr><td><i class="cb"></i></td><td class="t">1745</td><td><span class="ord">10000</span></td><td><span class="th"><svg width="40" height="40" viewBox="0 0 40 40"><defs><linearGradient id="g11" x1="0" y1="0" x2="1" y2="0"><stop offset="0" stop-color="#8f9199"/><stop offset=".45" stop-color="#c9cbd1"/><stop offset=".55" stop-color="#7e8088"/><stop offset="1" stop-color="#a9abb3"/></linearGradient></defs><rect x="15.4" y=".4" width="9.6" height="39.4" rx="1.6" fill="url(#g11)"/><rect x="19.4" y=".4" width=".9" height="39" fill="#5f6169"/></svg></span></td><td class="nm"><a id="n1745" style="letter-spacing:-0.189px">Підставка для ноутбука Baseus Zhichi Notebook Holder Dark Gray (SUZC-0G)</a></td><td class="t" style="letter-spacing:.14px">Mobile &amp; Gadgets</td><td></td><td class="pr t">500</td><td class="t">106</td><td class="t">806 / 0</td><td><svg class="ok" width="14" height="12" viewBox="0 0 14 12"><path d="M0.2 6.2 L2.6 4.6 L5.1 7.2 C7.6 4.2 10.4 1.8 13.6 0 L14 0.6 C10.9 3.6 8.3 7.2 6.2 12 L4.4 12 C3.4 9.8 2 7.8 0.2 6.2 Z" fill="#4caf50"/></svg></td><td class="t">-</td><td class="op"><a class="b1">修改</a> <a class="b2">删除</a> <a class="b3">回收折扣</a></td></tr>
    <tr><td><i class="cb"></i></td><td class="t">1744</td><td><span class="ord">10000</span></td><td><span class="th"><svg width="40" height="40" viewBox="0 0 40 40"><path d="M6.4 1.2 Q5 2.4 6.4 4 L9.6 7.2" stroke="#8d8d8d" stroke-width="1" fill="none"/><rect x="10.2" y="1.8" width="19.8" height="38.6" rx="6.2" fill="#a5152b"/><rect x="11.6" y="3" width="17" height="36.2" rx="5.4" fill="#9a1226"/><rect x="19.6" y="8.2" width="1.8" height="1.8" fill="#f2d6d6"/></svg></span></td><td class="nm"><a id="n1744" style="letter-spacing:-0.528px">Victorinox Тревеллер TRAVEL ACCESSORIES 5.0 Red RFID</a></td><td class="t" style="letter-spacing:.14px">Mobile &amp; Gadgets</td><td></td><td class="pr t">2940</td><td class="t">819</td><td class="t">128 / 0</td><td><svg class="ok" width="14" height="12" viewBox="0 0 14 12"><path d="M0.2 6.2 L2.6 4.6 L5.1 7.2 C7.6 4.2 10.4 1.8 13.6 0 L14 0.6 C10.9 3.6 8.3 7.2 6.2 12 L4.4 12 C3.4 9.8 2 7.8 0.2 6.2 Z" fill="#4caf50"/></svg></td><td class="t">-</td><td class="op"><a class="b1">修改</a> <a class="b2">删除</a> <a class="b3">回收折扣</a></td></tr>
    <tr><td><i class="cb"></i></td><td class="t">1743</td><td><span class="ord">10000</span></td><td><span class="th"><svg width="40" height="40" viewBox="0 0 40 40"><path d="M14.7 2.3 L37.7 3.7 L26.1 22.5 L2.7 16.1 Z" fill="#c2c2c2"/><path d="M14.7 2.3 L37.7 3.7 L36.8 5.2 L14 3.8 Z" fill="#9a9a9a"/><path d="M2.7 16.1 L26.1 22.5 L25.6 23.8 L2.6 17.4 Z" fill="#8d8d8d"/><path d="M13.4 19 L17.4 20 L22.6 27.4 L18.6 27.2 Z" fill="#a2a2a2"/><path d="M4.8 30.6 L16.9 25.4 L33.9 29.6 L21.8 38.8 Z" fill="#a6a6a6"/><path d="M4.8 30.6 L21.8 38.8 L21.8 39.8 L4.8 31.6 Z" fill="#8a8a8a"/></svg></span></td><td class="nm"><a id="n1743" style="letter-spacing:-0.210px">Підставка для ноутбука OfficePro LS113S</a></td><td class="t" style="letter-spacing:.14px">Mobile &amp; Gadgets</td><td></td><td class="pr t">1250</td><td class="t">900</td><td class="t">46 / 0</td><td><svg class="ok" width="14" height="12" viewBox="0 0 14 12"><path d="M0.2 6.2 L2.6 4.6 L5.1 7.2 C7.6 4.2 10.4 1.8 13.6 0 L14 0.6 C10.9 3.6 8.3 7.2 6.2 12 L4.4 12 C3.4 9.8 2 7.8 0.2 6.2 Z" fill="#4caf50"/></svg></td><td class="t">-</td><td class="op"><a class="b1">修改</a> <a class="b2">删除</a> <a class="b3">回收折扣</a></td></tr>
    <tr><td><i class="cb"></i></td><td class="t">1742</td><td><span class="ord">10000</span></td><td><span class="th"><svg width="40" height="40" viewBox="0 0 40 40"><defs><linearGradient id="g14" x1="0" y1="0" x2="1" y2="0"><stop offset="0" stop-color="#d560e8"/><stop offset=".5" stop-color="#63a8ff"/><stop offset="1" stop-color="#4fd8ff"/></linearGradient></defs><path d="M12.8 6 Q20.4 -2 28.4 5 Q33.4 14.6 32.4 25.6 Q30.4 37.6 22.4 40 Q13.4 39.6 10.4 30.6 Q7.6 25.6 9 19.6 Q10.4 12 12.8 6 Z" fill="#202124"/><path d="M12.8 6 Q10.4 12 9 19.6 L12.4 21 Q13 12 15.6 5.2 Z" fill="#3a3b40"/><rect x="19.6" y="5" width="2.6" height="7.6" rx="1.3" fill="#3f4046"/><path d="M10.6 30.4 Q18 33 28 31.4 L29.6 27.4 L31.6 33.2" stroke="url(#g14)" stroke-width="1.1" fill="none"/></svg></span></td><td class="nm"><a id="n1742" style="letter-spacing:-0.247px">Миша Logitech G502 X PLUS Black (910-006162)</a></td><td class="t" style="letter-spacing:.14px">Mobile &amp; Gadgets</td><td></td><td class="pr t">9588</td><td class="t">906</td><td class="t">73 / 0</td><td><svg class="ok" width="14" height="12" viewBox="0 0 14 12"><path d="M0.2 6.2 L2.6 4.6 L5.1 7.2 C7.6 4.2 10.4 1.8 13.6 0 L14 0.6 C10.9 3.6 8.3 7.2 6.2 12 L4.4 12 C3.4 9.8 2 7.8 0.2 6.2 Z" fill="#4caf50"/></svg></td><td class="t">-</td><td class="op"><a class="b1">修改</a> <a class="b2">删除</a> <a class="b3">回收折扣</a></td></tr>
    <tr><td><i class="cb"></i></td><td class="t">1741</td><td><span class="ord">10000</span></td><td><span class="th"><svg width="40" height="40" viewBox="0 0 40 40"><path d="M9.4 9.6 Q10 6.2 13.6 6 L20 6 Q22.6 6.4 23.4 9.6 Z" fill="#1a1a1a"/><path d="M2 11.4 Q2.4 9.4 4.6 9.2 L35.4 9.8 Q38.4 10.4 39 13.4 L39.4 31.6 Q39 34.8 36 35.4 L4.6 35 Q2 34.6 1.6 32 Z" fill="#1d1d1d"/><rect x="12.8" y="10.2" width="6.6" height="5.4" rx="1.4" fill="#0a0a0a"/><rect x="8.2" y="18" width="16.6" height="10.8" rx=".8" fill="#2d2d2d"/><rect x="8.6" y="30.4" width="12" height="2.2" fill="#3a3a3a"/><circle cx="30" cy="20" r="2.6" fill="#2c2c2c"/><path d="M26 10 Q32 9 38 13 L38 30 Q34 34 27 34 Z" fill="#262626"/><circle cx="5" cy="22" r="1" fill="#3a3a3a"/><circle cx="5" cy="26" r="1" fill="#3a3a3a"/></svg></span></td><td class="nm"><a id="n1741" style="letter-spacing:0.092px">Корпус Canon/Nikon D6, чорний</a></td><td class="t" style="letter-spacing:.14px">Mobile &amp; Gadgets</td><td></td><td class="pr t">168800</td><td class="t">996</td><td class="t">2 / 0</td><td><svg class="ok" width="14" height="12" viewBox="0 0 14 12"><path d="M0.2 6.2 L2.6 4.6 L5.1 7.2 C7.6 4.2 10.4 1.8 13.6 0 L14 0.6 C10.9 3.6 8.3 7.2 6.2 12 L4.4 12 C3.4 9.8 2 7.8 0.2 6.2 Z" fill="#4caf50"/></svg></td><td class="t">-</td><td class="op"><a class="b1">修改</a> <a class="b2">删除</a> <a class="b3">回收折扣</a></td></tr>
    <tr><td><i class="cb"></i></td><td class="t">1740</td><td><span class="ord">10000</span></td><td><span class="th"><svg width="40" height="40" viewBox="0 0 40 40"><defs><linearGradient id="g16" x1="0" y1="0" x2="1" y2=".3"><stop offset="0" stop-color="#a5371d"/><stop offset=".55" stop-color="#cf6a1e"/><stop offset="1" stop-color="#eaa52c"/></linearGradient></defs><rect width="40" height="40" fill="url(#g16)"/><rect x="4" y="5.8" width="27" height="2.6" fill="#fff" opacity=".88"/><rect x="4" y="9" width="12" height="1" fill="#fff" opacity=".6"/><rect x="7.4" y="13" width="25.6" height="17" rx=".8" fill="#2a0e08"/><path d="M8.4 29 C10 20 14 17 18 19 C22 14 27 16 28 21 C30 17 32 17 32.2 19 V29 Z" fill="#e9571a"/><path d="M14 29 C16 23 20 21 24 24 C27 21 30 23 32.2 26 V29 Z" fill="#ff8a2a"/><rect x="5.6" y="30" width="29.4" height="1.2" fill="#8b7f78"/><rect x="1.6" y="36" width="13.6" height="2.4" fill="#fff" opacity=".92"/><rect x="33" y="33.4" width="4" height="4" fill="#141414"/></svg></span></td><td class="nm"><a id="n1740" style="letter-spacing:-0.205px">13-inch MacBook Pro Apple M2 24GB RAM 1TB SSD 8-core CPU 10-Core GPU Laptop Mac</a></td><td class="t" style="letter-spacing:.14px">Mobile &amp; Gadgets</td><td></td><td class="pr t">31600</td><td class="t">958</td><td class="t">19 / 0</td><td><svg class="ok" width="14" height="12" viewBox="0 0 14 12"><path d="M0.2 6.2 L2.6 4.6 L5.1 7.2 C7.6 4.2 10.4 1.8 13.6 0 L14 0.6 C10.9 3.6 8.3 7.2 6.2 12 L4.4 12 C3.4 9.8 2 7.8 0.2 6.2 Z" fill="#4caf50"/></svg></td><td class="t">-</td><td class="op"><a class="b1">修改</a> <a class="b2">删除</a> <a class="b3">回收折扣</a></td></tr>
    <tr><td><i class="cb"></i></td><td class="t">1739</td><td><span class="ord">10000</span></td><td><span class="th"><svg width="40" height="40" viewBox="0 0 40 40"><defs><linearGradient id="g17" x1="0" y1="0" x2="1" y2=".3"><stop offset="0" stop-color="#4b2b70"/><stop offset=".55" stop-color="#83689c"/><stop offset="1" stop-color="#bdaec8"/></linearGradient></defs><rect width="40" height="40" fill="url(#g17)"/><rect x="4" y="5.8" width="27" height="2.6" fill="#fff" opacity=".88"/><rect x="4" y="9" width="12" height="1" fill="#fff" opacity=".6"/><rect x="8" y="14" width="24" height="15.6" rx=".8" fill="#1e1132"/><path d="M9 16 L18 22 L9 26 Z M20 15 L31 15 L31 19 L22 22 Z M31 22 L31 28 L22 28 L22 24 Z M12 28 L20 23.4 L20 28 Z" fill="#d9cbe6"/><rect x="1.6" y="36" width="13.6" height="2.4" fill="#fff" opacity=".92"/><rect x="33" y="33.4" width="4" height="4" fill="#141414"/></svg></span></td><td class="nm"><a id="n1739" style="letter-spacing:-0.351px">MacBook Air Apple M2 16GB RAM 512GB SSD 8-core CPU 8-Core GPU Laptop SPACE GREY</a></td><td class="t" style="letter-spacing:.14px">Mobile &amp; Gadgets</td><td></td><td class="pr t">31600</td><td class="t">974</td><td class="t">15 / 0</td><td><svg class="ok" width="14" height="12" viewBox="0 0 14 12"><path d="M0.2 6.2 L2.6 4.6 L5.1 7.2 C7.6 4.2 10.4 1.8 13.6 0 L14 0.6 C10.9 3.6 8.3 7.2 6.2 12 L4.4 12 C3.4 9.8 2 7.8 0.2 6.2 Z" fill="#4caf50"/></svg></td><td class="t">-</td><td class="op"><a class="b1">修改</a> <a class="b2">删除</a> <a class="b3">回收折扣</a></td></tr>
    <tr><td><i class="cb"></i></td><td></td><td><span class="ord"></span></td><td><span class="th"><svg width="40" height="40" viewBox="0 0 40 40"><rect x="2" y="4.2" width="4.4" height="12" rx=".8" fill="#5d2a86"/><rect x="3" y="5.4" width="2.4" height="5" fill="#d8b070"/><circle cx="10" cy="7" r="2.6" fill="#b6c43a"/><circle cx="10" cy="7" r="1.2" fill="#e2e88a"/><rect x="8" y="13" width="3" height="4" fill="#222"/><rect x="14" y="13" width="3" height="4" fill="#222"/><rect x="26" y="13" width="3" height="4" fill="#222"/><rect x="32" y="13" width="3" height="4" fill="#222"/></svg></span></td><td class="nm"></td><td></td><td></td><td></td><td></td><td></td><td></td><td></td><td class="op"><a class="b1">修改</a> <a class="b2">删除</a> <a class="b3">回收折扣</a></td></tr>
   </tbody>
  </table>
 </div>
</div>
<div id="sbar"><i class="up"></i><i class="thumb"></i></div>
<svg id="stamp" width="2560" height="1271" viewBox="0 0 2560 1271">
<defs><filter id="sf" x="990" y="345" width="585" height="585" filterUnits="userSpaceOnUse"><feGaussianBlur stdDeviation="0.45"/></filter></defs>
<g filter="url(#sf)">
<path fill="#ff0000" fill-rule="evenodd" d="M1002.80 636.75 A279.10 279.10 0 1 0 1561.00 636.75 A279.10 279.10 0 1 0 1002.80 636.75 Z M1014.30 637.95 A268.95 268.95 0 1 0 1552.20 637.95 A268.95 268.95 0 1 0 1014.30 637.95 Z"/>
<path fill="#ff0000" fill-rule="evenodd" d="M1085.85 641.35 A200.30 200.30 0 1 0 1486.45 641.35 A200.30 200.30 0 1 0 1085.85 641.35 Z M1097.15 642.10 A189.80 189.80 0 1 0 1476.75 642.10 A189.80 189.80 0 1 0 1097.15 642.10 Z"/>
<polygon fill="#ff0000" points="1281.2,596.8 1295.1,625.8 1325.8,631 1303.9,653.7 1308.8,686 1281.2,671.4 1253.5,686 1258.5,653.7 1236.8,631 1267.2,625.8"/>
</g>
<g fill="#d61616" font-family="'Liberation Sans',sans-serif" font-weight="bold" font-size="45" text-anchor="middle" stroke="#d61616" stroke-width="1.7" stroke-linejoin="round">
<text transform="translate(1176.0 440.4) rotate(-28.7)" y="17">海</text>
<text transform="translate(1243.9 411.70000000000005) rotate(-9.85)" y="17">尔</text>
<text transform="translate(1318.1 409.5) rotate(8.7)" y="17">源</text>
<text transform="translate(1389.4 437.0) rotate(27.2)" y="17">码</text>
</g>
<g fill="#d61616" font-family="'Liberation Sans',sans-serif" font-weight="bold" text-anchor="middle" stroke="#d61616" stroke-width="0.9">
<text font-size="46.0" transform="translate(1104.2 787.2) rotate(47) scale(0.94 1)" y="12.2">w</text>
<text font-size="46.0" transform="translate(1133.6 815.1) rotate(41.5) scale(0.94 1)" y="12.2">w</text>
<text font-size="46.0" transform="translate(1166.6 840.0) rotate(34) scale(0.94 1)" y="12.2">w</text>
<circle cx="1190.0" cy="863.4" r="4.1" stroke="none"/>
<text font-size="46.4" transform="translate(1206.5 866.0) rotate(19.5) scale(1.0 1)" y="12.2">h</text>
<text font-size="47.3" transform="translate(1238.1 875.2) rotate(10) scale(1.0 1)" y="12.5">a</text>
<text font-size="47.3" transform="translate(1259.4 878.5) rotate(7) scale(1.0 1)" y="12.5">i</text>
<text font-size="47.3" transform="translate(1281.2 880.1) rotate(1) scale(1.0 1)" y="12.5">e</text>
<text font-size="47.3" transform="translate(1305.9 878.0) rotate(-9.2) scale(1.0 1)" y="12.5">r</text>
<text font-size="47.3" transform="translate(1324.6 873.0) rotate(-12) scale(1.0 1)" y="12.5">y</text>
<text font-size="46.4" transform="translate(1365.3 861.2) rotate(-21) scale(1.0 1)" y="12.2">m</text>
<circle cx="1390.6" cy="853.0" r="4.1" stroke="none"/>
<text font-size="46.4" transform="translate(1408.7 832.0) rotate(-33) scale(1.0 1)" y="12.2">c</text>
<text font-size="46.4" transform="translate(1429.1 815.5) rotate(-40) scale(1.0 1)" y="12.2">o</text>
<text font-size="46.4" transform="translate(1457.1 789.0) rotate(-45.7) scale(1.0 1)" y="12.2">m</text>
</g>
</svg>
</body></html>
